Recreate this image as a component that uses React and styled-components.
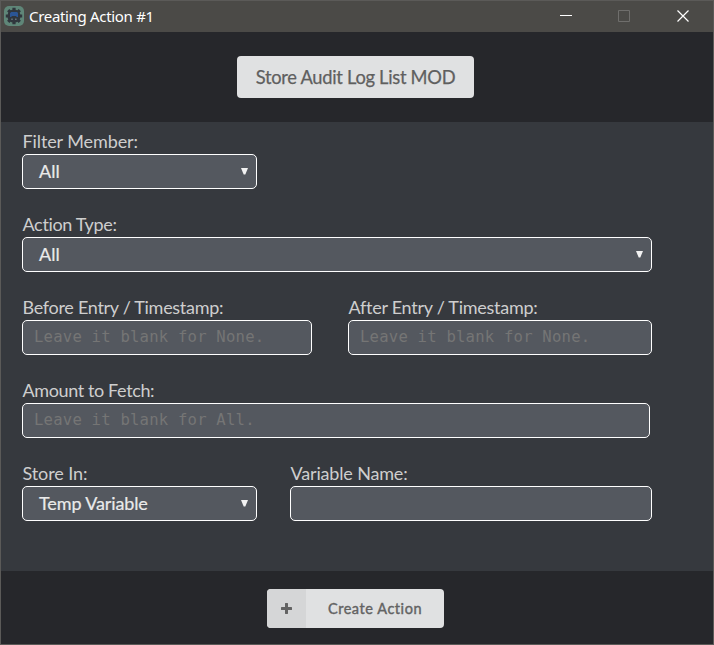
import React from 'react';
import styled, { createGlobalStyle } from 'styled-components';

const Global = createGlobalStyle`
  * { box-sizing: border-box; }
  body { margin: 0; background: #36393e; }
`;

const Window = styled.div`
  width: 714px;
  height: 645px;
  display: flex;
  flex-direction: column;
  border: 1px solid #5b5a58;
  background: #36393e;
  font-family: Lato, sans-serif;
  overflow: hidden;
`;

const TitleBar = styled.header`
  height: 31px;
  flex: none;
  display: flex;
  align-items: center;
  padding: 0 0 1px 3px;
  background: #4b4a47;
`;

const Title = styled.span`
  flex: 1;
  margin-left: 5px;
  color: #fff;
  font: 15px/20px 'Noto Sans', 'Open Sans', sans-serif;
  letter-spacing: ${(p) => p.$spacing}px;
  white-space: nowrap;
`;

const WindowButton = styled.span`
  width: ${(p) => p.$width || 58}px;
  height: 30px;
  display: flex;
  align-items: center;
  justify-content: center;
  & svg { display: block; }
`;

const Controls = styled.div`
  display: flex;
`;

const Header = styled.div`
  height: 90px;
  flex: none;
  display: flex;
  justify-content: center;
  align-items: center;
  padding-right: 3px;
  background: #26272b;
`;

const ActionName = styled.button`
  width: 237px;
  height: 42px;
  border: 0;
  border-radius: 4px;
  padding: 0;
  background: #e0e1e2;
  color: #5f5f5f;
  font: 18.3px/42px Lato, sans-serif;
  -webkit-text-stroke: 0.25px #5f5f5f;
  letter-spacing: ${(p) => p.$spacing}px;
  white-space: nowrap;
`;

const Form = styled.main`
  height: 449px;
  flex: none;
  padding: 10px 0 0 21px;
`;

const Row = styled.div`
  display: flex;
  height: 83px;
  gap: ${(p) => p.$gap || 0}px;
`;

const Field = styled.div`
  width: ${(p) => p.$width}px;
`;

const Label = styled.label`
  display: block;
  height: 22px;
  padding-left: 0.5px;
  color: #cecece;
  font-size: 18px;
  line-height: 18px;
  letter-spacing: ${(p) => p.$spacing || 0}px;
  white-space: nowrap;
`;

const Select = styled.div`
  height: 35px;
  display: flex;
  align-items: center;
  justify-content: space-between;
  padding: 0 8px 2px 16px;
  border: 1px solid #fff;
  border-radius: 5px;
  background: #54585f;
  color: #eaeaea;
  font-size: 18px;
  letter-spacing: ${(p) => p.$spacing || 0}px;
  -webkit-text-stroke: 0.2px #eaeaea;
  & svg { display: block; margin-top: 2px; }
`;

const Input = styled.input`
  display: block;
  width: 100%;
  height: 35px;
  padding: 0 11px 2px;
  border: 1px solid #fff;
  border-radius: 5px;
  outline: 0;
  background: #54585f;
  color: #eaeaea;
  font: 15.6px 'DejaVu Sans Mono', monospace;
  letter-spacing: 0.21px;
  &::placeholder { color: #757575; opacity: 1; }
`;

const Footer = styled.footer`
  flex: 1;
  display: flex;
  justify-content: center;
  padding: 18px 3px 0 0;
  background: #26272b;
`;

const CreateButton = styled.button`
  width: 177px;
  height: 39px;
  display: flex;
  padding: 0;
  border: 0;
  border-radius: 4px;
  overflow: hidden;
  background: #e0e1e2;
  color: #636363;
`;

const CreateIcon = styled.span`
  width: 39px;
  height: 39px;
  display: flex;
  align-items: center;
  justify-content: center;
  background: #d5d6d7;
`;

const CreateText = styled.span`
  flex: 1;
  font: 14.5px/39px Lato, sans-serif;
  -webkit-text-stroke: 0.4px #636363;
  letter-spacing: ${(p) => p.$spacing}px;
  text-align: center;
`;

const AppIcon = () => (
  <svg width="20" height="20" viewBox="0 0 20 20">
    <rect width="20" height="20" rx="5" fill="#5f8678" />
    <path
      d="M10 1.8v16.4M1.8 10h16.4M4.2 4.2l11.6 11.6M15.8 4.2 4.2 15.8"
      stroke="#30363d"
      strokeWidth="3.2"
    />
    <circle cx="10" cy="10" r="6.6" fill="#30363d" />
    <path d="M6 7.2 7.2 6h6L14 7.2V11h-1.6v-1H7.6v1H6z" fill="#2b5596" />
    <path d="M7.2 12.5h1.6v1.6H7.2zM11 12.5h1.6v1.6H11z" fill="#66717b" />
  </svg>
);

const Arrow = () => (
  <svg width="7" height="7" viewBox="0 0 7 7">
    <path d="M0 0h7L4.3 6.5H2.7z" fill="#f2f2f2" />
  </svg>
);

const SelectField = ({ label, value, width, spacing, valueSpacing }) => (
  <Field $width={width}>
    <Label $spacing={spacing}>{label}</Label>
    <Select $spacing={valueSpacing}>
      <span>{value}</span>
      <Arrow />
    </Select>
  </Field>
);

const InputField = ({ label, placeholder, width, spacing }) => (
  <Field $width={width}>
    <Label $spacing={spacing}>{label}</Label>
    <Input placeholder={placeholder} />
  </Field>
);

export default function App() {
  return (
    <>
      <Global />
      <Window>
        <TitleBar>
          <AppIcon />
          <Title $spacing={-0.32}>Creating Action #1</Title>
          <Controls>
            <WindowButton>
              <svg width="12" height="12"><path d="M0 5.5h12" stroke="#fff" /></svg>
            </WindowButton>
            <WindowButton>
              <svg width="12" height="12"><path d="M.5.5h11v11H.5z" fill="none" stroke="#6f6e6c" /></svg>
            </WindowButton>
            <WindowButton $width={60}>
              <svg width="12" height="12"><path d="m.5.5 11 11m0-11-11 11" stroke="#fff" strokeWidth="1.2" /></svg>
            </WindowButton>
          </Controls>
        </TitleBar>
        <Header>
          <ActionName $spacing={-0.28}>Store Audit Log List MOD</ActionName>
        </Header>
        <Form>
          <Row>
            <SelectField label="Filter Member:" value="All" width={235} spacing={-0.1} />
          </Row>
          <Row>
            <SelectField label="Action Type:" value="All" width={630} spacing={-0.33} />
          </Row>
          <Row $gap={36}>
            <InputField label="Before Entry / Timestamp:" placeholder="Leave it blank for None." width={290} spacing={-0.29} />
            <InputField label="After Entry / Timestamp:" placeholder="Leave it blank for None." width={304} spacing={-0.26} />
          </Row>
          <Row>
            <InputField label="Amount to Fetch:" placeholder="Leave it blank for All." width={628} spacing={-0.38} />
          </Row>
          <Row $gap={33}>
            <SelectField label="Store In:" value="Temp Variable" width={235} spacing={-0.1} valueSpacing={-0.12} />
            <InputField label="Variable Name:" width={362} spacing={-0.16} />
          </Row>
        </Form>
        <Footer>
          <CreateButton>
            <CreateIcon>
              <svg width="11" height="11" viewBox="0 0 11 11">
                <path d="M5.5 1v9M1 5.5h9" stroke="#636363" strokeWidth="3" strokeLinecap="round" />
              </svg>
            </CreateIcon>
            <CreateText $spacing={0.55}>Create Action</CreateText>
          </CreateButton>
        </Footer>
      </Window>
    </>
  );
}
